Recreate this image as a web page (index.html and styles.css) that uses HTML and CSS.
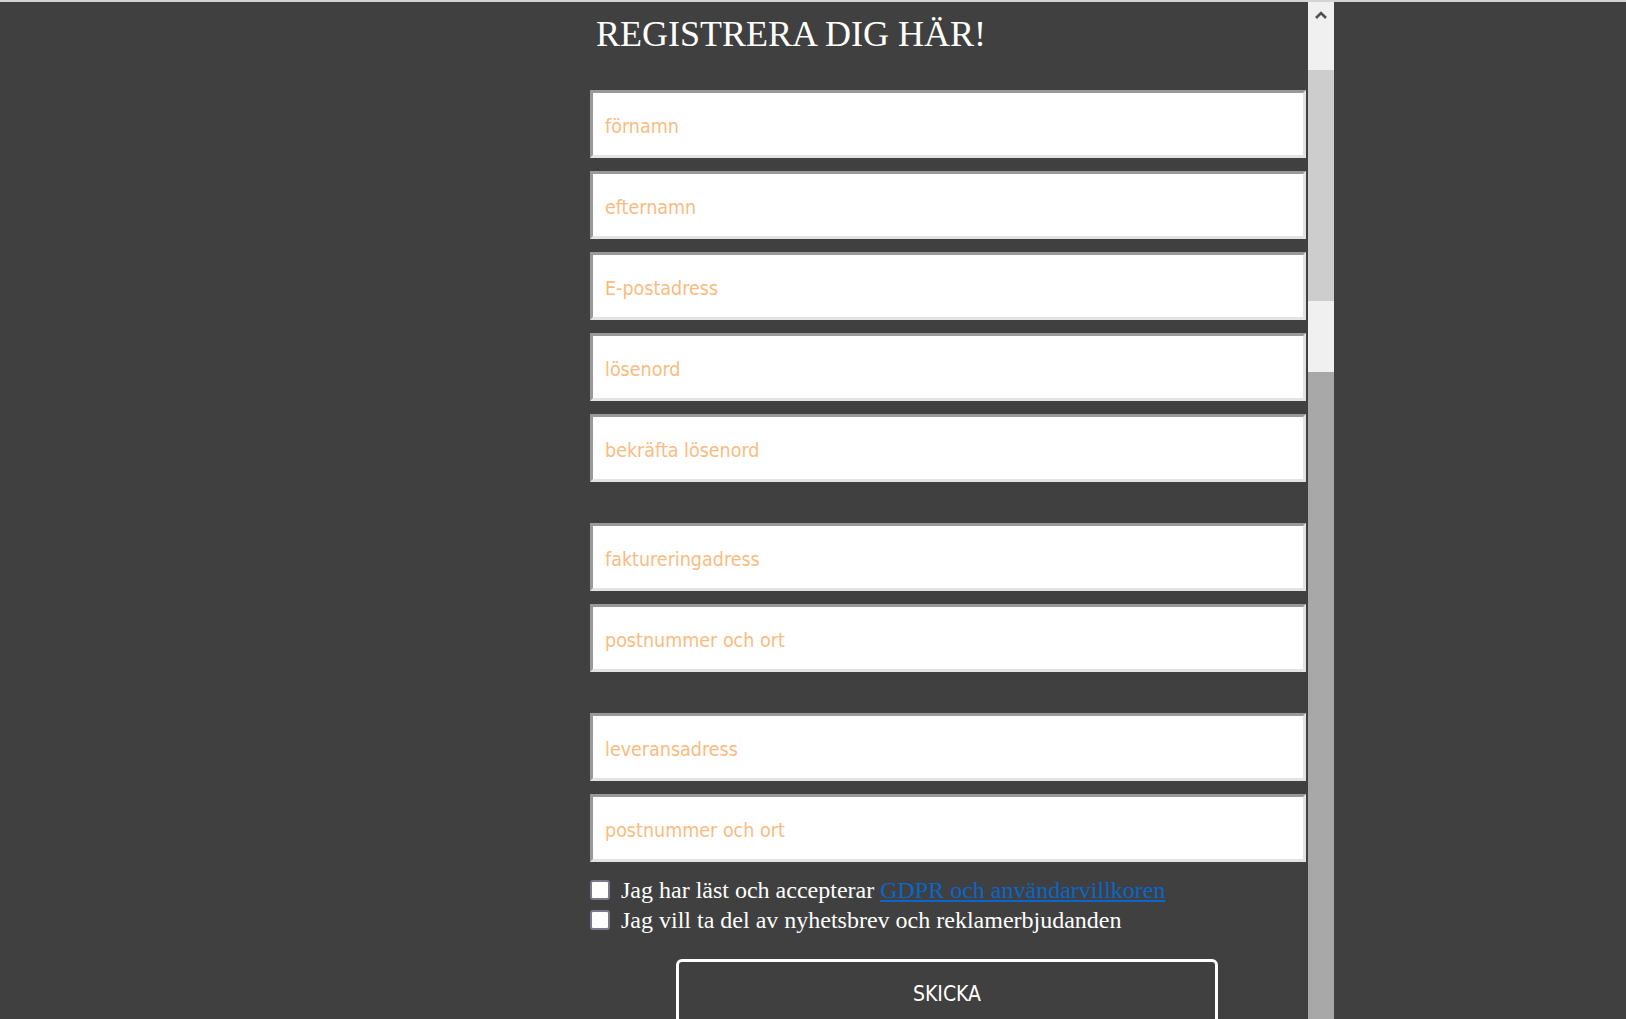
FILE: index.html
```html
<!DOCTYPE html>
<html lang="sv">
<head>
<meta charset="utf-8">
<title>Registrera dig</title>
<link rel="stylesheet" href="styles.css">
</head>
<body>
<div class="topline"></div>
<div class="frame">
  <main class="form-area">
    <h1 class="title">REGISTRERA DIG HÄR!</h1>
    <form class="form">
      <div class="group">
        <input class="field" type="text" placeholder="förnamn">
        <input class="field" type="text" placeholder="efternamn">
        <input class="field" type="email" placeholder="E-postadress">
        <input class="field" type="password" placeholder="lösenord">
        <input class="field" type="password" placeholder="bekräfta lösenord">
      </div>
      <div class="group">
        <input class="field" type="text" placeholder="faktureringadress">
        <input class="field" type="text" placeholder="postnummer och ort">
      </div>
      <div class="group">
        <input class="field" type="text" placeholder="leveransadress">
        <input class="field" type="text" placeholder="postnummer och ort">
      </div>
      <label class="check first"><input class="box" type="checkbox"><span>Jag har läst och accepterar <a href="#" class="link">GDPR och användarvillkoren</a></span></label>
      <label class="check"><input class="box" type="checkbox"><span>Jag vill ta del av nyhetsbrev och reklamerbjudanden</span></label>
      <button class="submit" type="button">SKICKA</button>
    </form>
  </main>
  <div class="scrollbar">
    <div class="sb-button">
      <svg width="14" height="10" viewBox="0 0 14 10"><path d="M2 8 L7 3 L12 8" fill="none" stroke="#505050" stroke-width="2.6"/></svg>
    </div>
    <div class="sb-thumb"></div>
    <div class="sb-track"></div>
    <div class="sb-rest"></div>
  </div>
</div>
</body>
</html>
```
FILE: styles.css
```css
html, body {
  margin: 0;
  padding: 0;
  height: 100%;
  overflow: hidden;
}
body {
  background: #404040;
}
.topline {
  height: 2px;
  background: #d4d4d4;
}
.frame {
  display: flex;
  gap: 2px;
  margin-left: 590px;
  width: 744px;
  height: calc(100vh - 2px);
}
.form-area {
  width: 716px;
  flex: none;
}
.title {
  margin: 0 0 0 6px;
  padding-top: 11px;
  height: 88px;
  box-sizing: border-box;
  font-family: "Liberation Serif", "Times New Roman", serif;
  font-weight: normal;
  font-size: 36px;
  line-height: 42px;
  color: #ffffff;
}
.form {
  display: flex;
  flex-direction: column;
}
.group {
  display: flex;
  flex-direction: column;
  gap: 13px;
  margin-bottom: 41px;
}
.group:last-of-type {
  margin-bottom: 0;
}
.field {
  box-sizing: border-box;
  width: 716px;
  height: 68px;
  margin: 0;
  border-width: 3px;
  border-style: solid;
  border-color: #999999 #e3e3e3 #e3e3e3 #999999;
  background: #ffffff;
  padding: 4px 12px 0;
  font-family: "DejaVu Sans Condensed", Tahoma, sans-serif;
  font-size: 19.5px;
  color: #333;
  outline: none;
}
.field::placeholder {
  color: #fbbb80;
  opacity: 1;
}
.check {
  display: flex;
  align-items: center;
  gap: 11px;
  height: 30px;
  font-family: "Liberation Serif", "Times New Roman", serif;
  font-size: 24px;
  color: #ffffff;
  white-space: nowrap;
}
.check.first {
  margin-top: 13px;
}
.link {
  color: #0a66c9;
  text-decoration: underline;
}
.box {
  appearance: none;
  -webkit-appearance: none;
  margin: 0;
  width: 20px;
  height: 20px;
  flex: none;
  box-sizing: border-box;
  border: 2px solid #7a7a8c;
  border-radius: 3px;
  background: #ffffff;
}
.submit {
  align-self: flex-start;
  margin-top: 24px;
  margin-left: 86px;
  width: 542px;
  height: 70px;
  box-sizing: border-box;
  border: 3px solid #ffffff;
  border-radius: 6px;
  background: transparent;
  color: #ffffff;
  font-family: "DejaVu Sans Condensed", Tahoma, sans-serif;
  font-size: 21px;
  padding: 0;
}
.scrollbar {
  width: 26px;
  flex: none;
  display: flex;
  flex-direction: column;
}
.sb-button {
  height: 68px;
  background: #f0f0f0;
  display: flex;
  justify-content: center;
  align-items: flex-start;
  padding-top: 8px;
  box-sizing: border-box;
}
.sb-thumb {
  height: 231px;
  background: #cdcdcd;
}
.sb-track {
  height: 71px;
  background: #f0f0f0;
}
.sb-rest {
  flex: 1;
  background: #a8a8a8;
}
```
